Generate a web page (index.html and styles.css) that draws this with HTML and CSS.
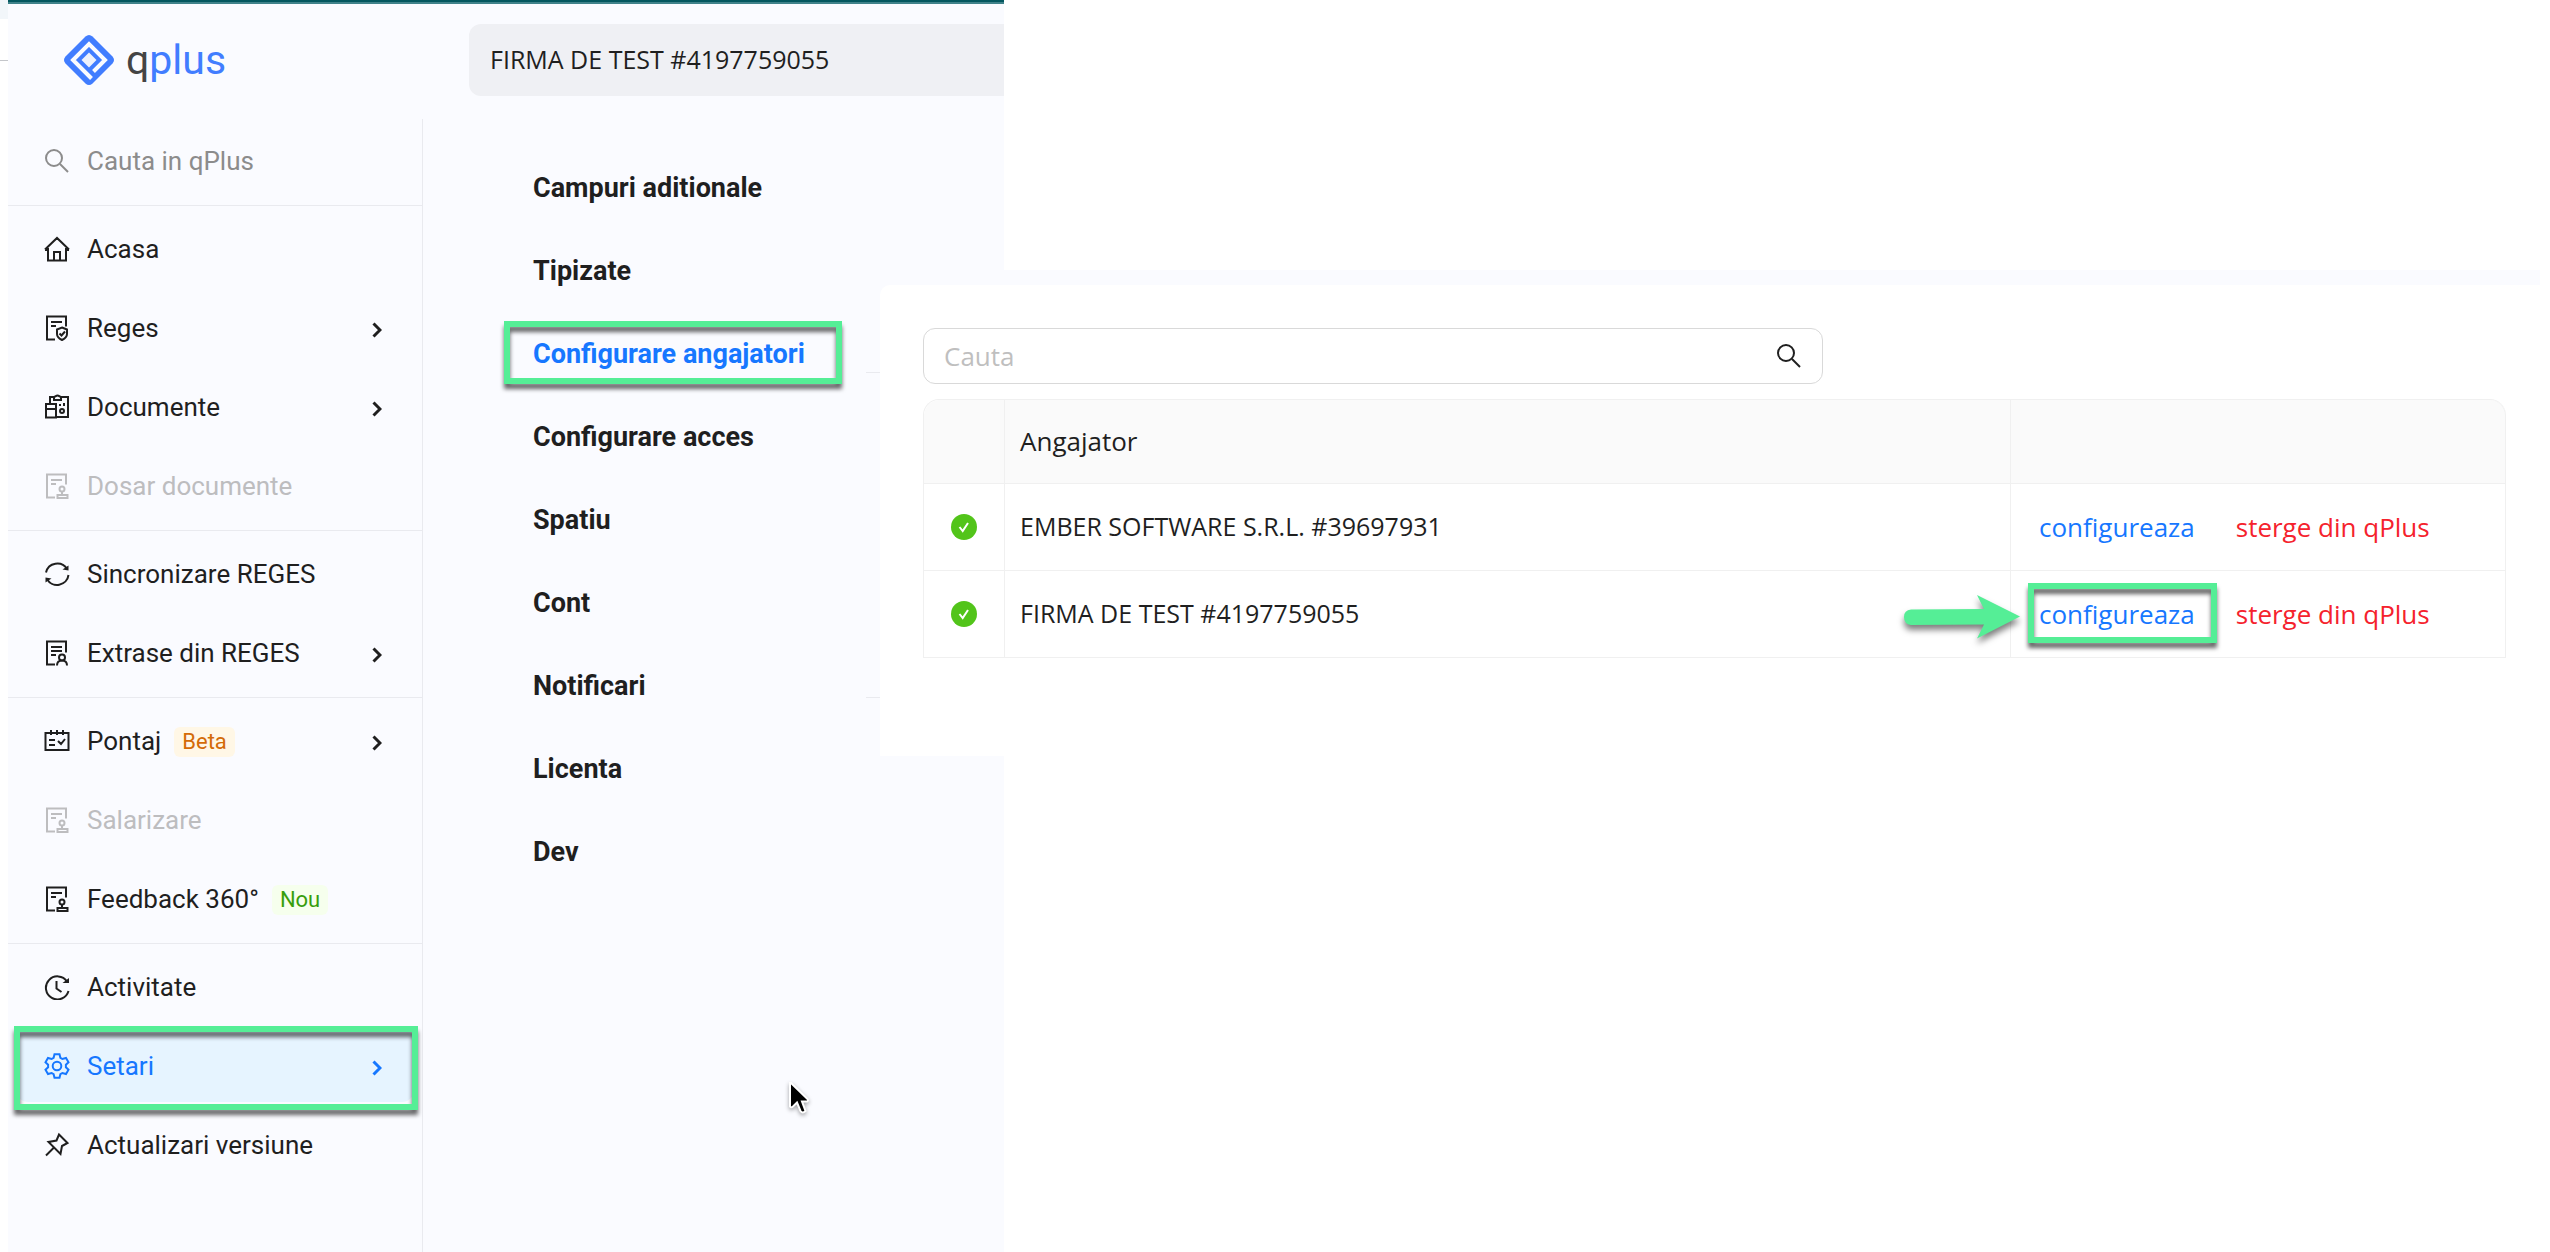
FILE: index.html
```html
<!DOCTYPE html>
<html lang="ro">
<head>
<meta charset="utf-8">
<title>qPlus – Configurare angajatori</title>
<link rel="stylesheet" href="styles.css">
</head>
<body>
<svg class="sprite" aria-hidden="true">
  <symbol id="i-search" viewBox="0 0 26 26"><circle cx="10" cy="10" r="8"/><path d="M16 16l8 8"/></symbol>
  <symbol id="i-home" viewBox="0 0 26 26"><path d="M1 13.500L13 2l12 11.500M4 12v12.500h18V12M10 24v-8h6v8M1 14h3M22 14h3"/></symbol>
  <symbol id="i-shield" viewBox="0 0 26 26"><path d="M11 24.500H3v-23h19v10M7 7h11M7 11h5"/><path d="M18 12.500l5 2v4.500c0 3-2 4.500-5 6-3-1.500-5-3-5-6v-4.500zM15.500 18.500l2 2 3.500-4"/></symbol>
  <symbol id="i-docs" viewBox="0 0 26 26"><path d="M6 9V3h4M17 3h7v20H12M10 6V3c1 0 2-1.500 3.500-1.500S16 3 17 3v3zM2 10h10v13.500H2zM2 15h10M15 11h2M20 9v3"/><circle cx="18" cy="17" r="2"/></symbol>
  <symbol id="i-stamp" viewBox="0 0 26 26"><path d="M11 24.500H3v-23h19v10M7 7h11M7 11h5"/><circle cx="18" cy="16" r="2.500"/><path d="M18 18.500V22M13.500 22h10v3h-10z"/></symbol>
  <symbol id="i-sync" viewBox="0 0 26 26"><path d="M2 11.500A11.500 11.500 0 0 1 23 8M24.500 14A11.500 11.500 0 0 1 3 18"/><path class="solid" d="M18.500 8.500l6-4v5zM7.500 17.500l-6 4v-5z"/></symbol>
  <symbol id="i-person" viewBox="0 0 26 26"><path d="M11 24.500H3v-23h19v11M7 7h11M7 11h11M7 15h5"/><circle cx="18" cy="17.500" r="3"/><path d="M13 25.500c0-3 2-5 5-5s5 2 5 5"/></symbol>
  <symbol id="i-cal" viewBox="0 0 26 26"><path d="M1.500 5h23v17h-23zM7 2v5M13 2v5M19 2v5M5 12h6M5 17h6M14 13l3 3 4-5"/></symbol>
  <symbol id="i-history" viewBox="0 0 26 26"><path d="M23 7.500A11.500 11.500 0 1 0 24.500 17M12.500 7v7.500l5 3.500"/><path class="solid" d="M18.500 9l6.500-5v5z"/></symbol>
  <symbol id="i-gear" viewBox="0 0 26 26"><path d="M10.500 1.200h5l.9 3.600 2 1.200 3.600-1 2.500 4.300-2.600 2.500v2.400l2.600 2.500-2.500 4.300-3.600-1-2 1.200-.9 3.600h-5l-.9-3.600-2-1.200-3.600 1-2.500-4.300 2.600-2.500v-2.400L1.500 9.300 4 5l3.600 1 2-1.200z"/><circle cx="13" cy="13" r="4.300"/></symbol>
  <symbol id="i-pin" viewBox="0 0 26 26"><path d="M15 2.500l8.500 8.500-5.500 3-1.500 8L4.500 10l8-1.500zM9.500 16L2 23.500"/></symbol>
  <symbol id="i-chevron" viewBox="0 0 10 16"><path d="M1.500 1.500L8 8l-6.500 6.500"/></symbol>
</svg>

<div class="canvas">
  <div class="edge"></div>

  <div class="app">
    <header class="topbar">
      <a class="logo" href="#">
        <svg class="logo-mark" viewBox="0 0 50 50" aria-hidden="true">
          <path class="logo-fill" d="M21.500 1.500q3.500-3 7 0l20 20q3 3.500 0 7l-20 20q-3.500 3-7 0l-20-20q-3-3.500 0-7z"/>
          <path class="logo-ring" d="M27.500 43.500L9 25 25 9l16 16-11.500 11.500"/>
          <path class="logo-core" d="M25 17.500l7.500 7.500-7.500 7.500-7.500-7.500z"/>
        </svg>
        <span class="logo-text"><span class="logo-q">q</span>plus</span>
      </a>
      <button class="company" type="button">FIRMA DE TEST #4197759055</button>
    </header>

    <div class="workspace">
      <nav class="sidebar">
        <a class="item item-search" href="#"><svg class="icon"><use href="#i-search"/></svg>Cauta in qPlus</a>
        <hr>
        <a class="item" href="#"><svg class="icon"><use href="#i-home"/></svg>Acasa</a>
        <a class="item" href="#"><svg class="icon"><use href="#i-shield"/></svg>Reges<svg class="chevron"><use href="#i-chevron"/></svg></a>
        <a class="item" href="#"><svg class="icon"><use href="#i-docs"/></svg>Documente<svg class="chevron"><use href="#i-chevron"/></svg></a>
        <a class="item item-disabled" href="#"><svg class="icon"><use href="#i-stamp"/></svg>Dosar documente</a>
        <hr>
        <a class="item" href="#"><svg class="icon"><use href="#i-sync"/></svg>Sincronizare REGES</a>
        <a class="item" href="#"><svg class="icon"><use href="#i-person"/></svg>Extrase din REGES<svg class="chevron"><use href="#i-chevron"/></svg></a>
        <hr>
        <a class="item" href="#"><svg class="icon"><use href="#i-cal"/></svg>Pontaj<span class="tag tag-beta">Beta</span><svg class="chevron"><use href="#i-chevron"/></svg></a>
        <a class="item item-disabled" href="#"><svg class="icon"><use href="#i-stamp"/></svg>Salarizare</a>
        <a class="item" href="#"><svg class="icon"><use href="#i-stamp"/></svg>Feedback 360°<span class="tag tag-new">Nou</span></a>
        <hr>
        <a class="item" href="#"><svg class="icon"><use href="#i-history"/></svg>Activitate</a>
        <a class="item item-active marked" href="#"><svg class="icon"><use href="#i-gear"/></svg>Setari<svg class="chevron"><use href="#i-chevron"/></svg></a>
        <a class="item" href="#"><svg class="icon"><use href="#i-pin"/></svg>Actualizari versiune</a>
      </nav>

      <nav class="settings">
        <a href="#">Campuri aditionale</a>
        <a href="#">Tipizate</a>
        <a class="current marked" href="#">Configurare angajatori</a>
        <a href="#">Configurare acces</a>
        <a href="#">Spatiu</a>
        <a href="#">Cont</a>
        <a href="#">Notificari</a>
        <a href="#">Licenta</a>
        <a href="#">Dev</a>
      </nav>

      <div class="underlay"><hr><hr></div>
    </div>

    <svg class="cursor" viewBox="0 0 26 38" aria-hidden="true"><path d="M4 3v23.500q1 1.500 3 0l4-4 3.500 8.500q2 3 5 0l-3.500-9.500h5q2-1 0-3L5 3z"/></svg>
  </div>

  <main class="panel">
    <section class="card">
      <label class="search">
        <input type="search" placeholder="Cauta" aria-label="Cauta">
        <svg class="icon"><use href="#i-search"/></svg>
      </label>
      <table class="grid">
        <colgroup><col class="col-status"><col><col class="col-actions"></colgroup>
        <thead><tr><th></th><th>Angajator</th><th></th></tr></thead>
        <tbody>
          <tr>
            <td class="status"><svg class="ok" viewBox="0 0 26 26"><circle cx="13" cy="13" r="13"/><path d="M8.500 13l3.200 4 5.300-8"/></svg></td>
            <td class="name">EMBER SOFTWARE S.R.L. #39697931</td>
            <td><div class="actions"><a href="#">configureaza</a><a class="danger" href="#">sterge din qPlus</a></div></td>
          </tr>
          <tr>
            <td class="status"><svg class="ok" viewBox="0 0 26 26"><circle cx="13" cy="13" r="13"/><path d="M8.500 13l3.200 4 5.300-8"/></svg></td>
            <td class="name">FIRMA DE TEST #4197759055</td>
            <td><div class="actions"><a class="marked" href="#">configureaza<svg class="arrow" viewBox="0 0 116 44" aria-hidden="true"><path d="M7 14.500L80 14 73 0l43 21.500L73 43.500l7-14L7 30Q0 29 0 22t7-7.500z"/></svg></a><a class="danger" href="#">sterge din qPlus</a></div></td>
          </tr>
        </tbody>
      </table>
    </section>
  </main>
</div>
</body>
</html>
```
FILE: styles.css
```css
:root {
  --ink: #1f1f1f;
  --blue: #1677ff;
  --surface: #fafbff;
  --line: #e9eaef;
  --mark: #55ee96;
}

* { box-sizing: border-box; }

body {
  margin: 0;
  background: #fff;
  color: var(--ink);
  font: 500 26px/36px "Open Sans", sans-serif;
}

a { color: inherit; text-decoration: none; }
hr { margin: 0; border: 0; border-top: 1px solid var(--line); }
svg { fill: none; stroke: currentColor; stroke-width: 2; }
.sprite { display: none; }
.solid { fill: currentColor; stroke: none; }

.canvas {
  display: grid;
  grid-template-columns: 8px 872px 124px minmax(0, 1fr);
  min-height: 100vh;
  padding-right: 10px;
}

.edge {
  grid-area: 1 / 1;
  height: 61px;
  border-top: 19px solid #f2f6fa;
  border-bottom: 1px solid #c4c6ca;
}

/* Main application window */
.app {
  position: relative;
  grid-area: 1 / 2 / 2 / 4;
  display: flex;
  flex-direction: column;
  border-top: 2px solid #03575f;
  background: var(--surface);
  box-shadow: inset 0 2px #3f828a;
}

.topbar {
  display: flex;
  align-items: flex-start;
  height: 117px;
  padding-top: 22px;
}

.logo {
  display: flex;
  align-items: center;
  gap: 12px;
  width: 461px;
  height: 72px;
  padding-left: 56px;
}
.logo-mark { width: 50px; height: 50px; }
.logo-fill { fill: #417dff; stroke: none; }
.logo-ring { stroke: var(--surface); stroke-width: 4; }
.logo-core { fill: #eff2fb; stroke: none; }
.logo-text { color: #417dff; font: 400 41px/48px Roboto, sans-serif; }
.logo-q { color: #444; }

.company {
  flex: 1;
  height: 72px;
  padding: 0 21px 2px;
  border: 0;
  border-radius: 12px 0 0 12px;
  background: #eff0f4;
  color: var(--ink);
  font: inherit;
  font-size: 25px;
  text-align: left;
}

.workspace { display: flex; flex: 1; }

.sidebar {
  display: flex;
  flex-direction: column;
  width: 415px;
  padding-top: 2px;
  border-right: 1px solid var(--line);
  font-family: Roboto, sans-serif;
  font-weight: 400;
}
.sidebar hr { margin: 5px 0 3px; }
.item {
  position: relative;
  display: flex;
  align-items: center;
  height: 73px;
  margin: 3px 8px;
  padding: 0 32px 0 28px;
  border-radius: 12px;
}
.item-search { color: #8c8c8c; }
.item-disabled { color: #bdbdbf; }
.item-active { background: #e6f4ff; color: var(--blue); }
.icon { flex: none; width: 26px; height: 26px; margin-right: 17px; }
.chevron { width: 10px; height: 16px; margin: 4px 0 0 auto; stroke-width: 3; }

.tag {
  margin: 2px 0 0 13px;
  padding: 0 8px;
  border-radius: 6px;
  font-size: 22px;
  line-height: 30px;
}
.tag-beta { background: #fff7e6; color: #d46b08; }
.tag-new { background: #f6ffed; color: #389e0d; }

.settings {
  display: flex;
  flex: none;
  flex-direction: column;
  align-items: flex-start;
  gap: 20px;
  width: 443px;
  padding: 37px 0 0 81px;
  font: 700 27px/36px Roboto, sans-serif;
}
.settings a {
  position: relative;
  height: 63px;
  padding: 14px 37px 13px 29px;
}
.current { color: var(--blue); }

.underlay { flex: 1; padding-top: 253px; }
.underlay hr + hr { margin-top: 324px; }

/* Highlight frames drawn over the interface */
.marked::after {
  content: "";
  position: absolute;
  inset: -1px 0 1px;
  border: 6px solid var(--mark);
  filter: drop-shadow(0 5px 2px rgba(0, 0, 0, .6));
}
.item.marked::after { inset: -3px -4px -8px -2px; }

.cursor {
  position: absolute;
  left: 778px;
  top: 1078px;
  width: 26px;
  height: 38px;
  fill: #000;
  stroke: #fff;
  filter: drop-shadow(0 2px 2px rgba(0, 0, 0, .35));
}

/* Employers window */
.panel {
  z-index: 1;
  grid-area: 1 / 3 / 2 / 5;
  align-self: start;
  margin-top: 270px;
  padding-top: 15px;
  background: var(--surface);
}
.card {
  min-height: 471px;
  padding: 43px 34px 98px 43px;
  border-top-left-radius: 10px;
  background: #fff;
}

.search {
  display: flex;
  align-items: center;
  width: 60%;
  max-width: 900px;
  height: 56px;
  margin-bottom: 15px;
  padding: 0 3px 0 20px;
  border: 1px solid #d9d9d9;
  border-radius: 12px;
}
.search input {
  flex: 1;
  min-width: 0;
  padding: 0;
  border: 0;
  outline: 0;
  background: none;
  font: inherit;
  font-weight: 400;
}
.search input::placeholder { color: #bfbfbf; }

.grid {
  width: 100%;
  border: 1px solid #f0f0f0;
  border-width: 1px 0 0 1px;
  border-radius: 16px 16px 0 0;
  border-spacing: 0;
  table-layout: fixed;
}
.col-status { width: 81px; }
.col-actions { width: 495px; }
.grid th, .grid td {
  height: 87px;
  padding: 0 15px;
  border: 1px solid #f0f0f0;
  border-width: 0 1px 1px 0;
  text-align: left;
}
.grid th { height: 84px; padding-bottom: 2px; background: #fafafa; font-weight: 500; }
.grid th:first-child { border-top-left-radius: 16px; }
.grid th:last-child { border-top-right-radius: 16px; }
.grid .name { padding-bottom: 2px; font-size: 25px; }
.grid .status { text-align: center; }
.ok { display: block; width: 26px; height: 26px; margin: 0 auto; stroke: none; }
.ok circle { fill: #52c41a; }
.ok path { stroke: #fff; }

.actions { display: flex; gap: 8px; margin-left: 2px; }
.actions a { position: relative; padding: 12px 22px 12px 11px; color: var(--blue); }
.actions .danger { color: #f5222d; }
.arrow {
  position: absolute;
  right: 100%;
  top: 11px;
  width: 116px;
  height: 44px;
  margin-right: 8px;
  fill: var(--mark);
  stroke: none;
  filter: drop-shadow(0 5px 3px rgba(0, 0, 0, .5));
}
```
